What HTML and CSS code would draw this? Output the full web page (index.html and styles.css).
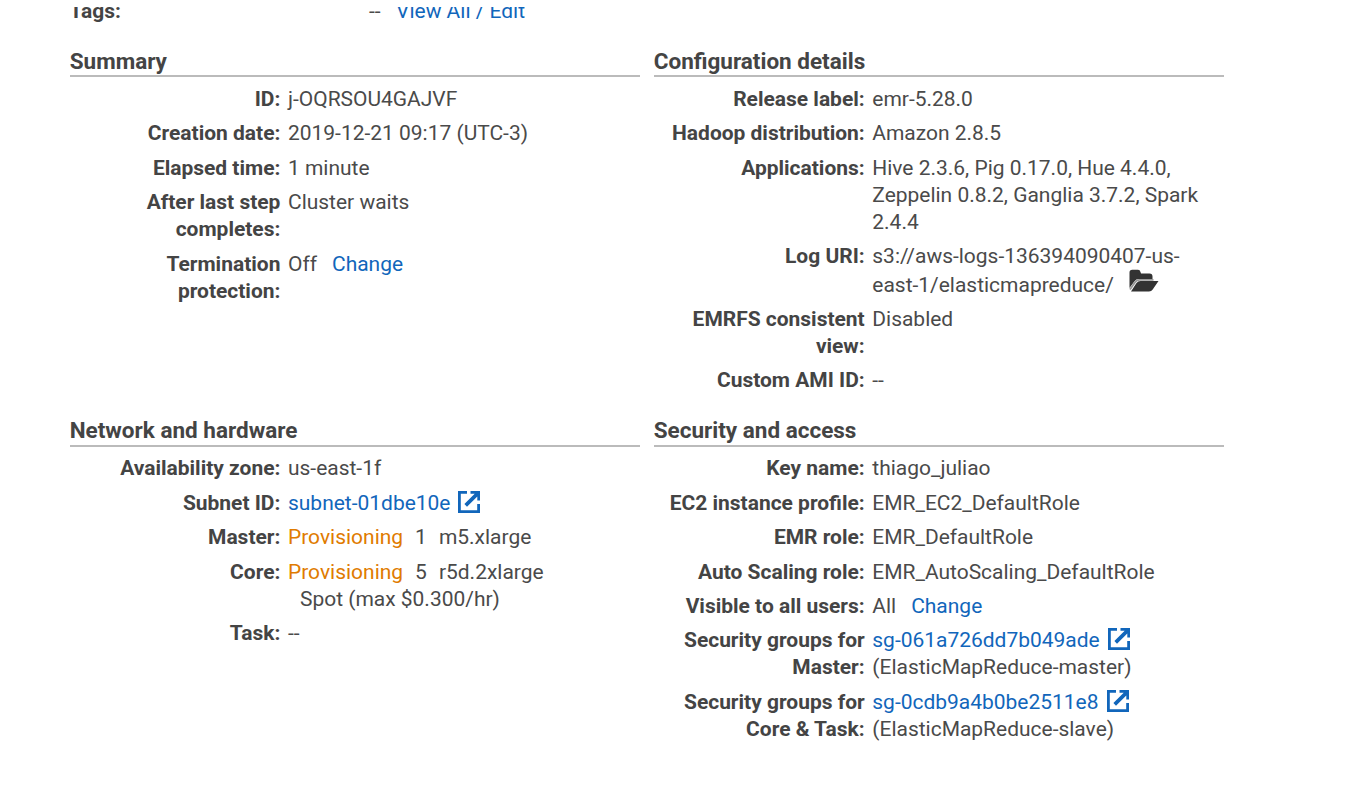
FILE: index.html
```html
<!DOCTYPE html>
<html lang="en">
<head>
<meta charset="utf-8">
<title>Cluster details</title>
<link rel="stylesheet" href="styles.css">
</head>
<body>
<svg class="defs" width="0" height="0"><symbol id="ext" viewBox="0 0 22 22"><path d="M9 1.400H1.400v19.200h19.200V13" fill="none" stroke="currentColor" stroke-width="2.800"/><path d="M12.500 0H22v9.500h-2.700V5.400L9 15.700 6.400 13.100 16.700 2.800H12.500Z" fill="currentColor"/></symbol></svg>
<main class="page">
<div class="tags"><b class="tags-label">Tags:</b><span>--</span><a class="tags-link">View All / Edit</a></div>
<div class="grid">
<section class="panel top left">
<h2>Summary</h2>
<dl>
<dt>ID:</dt><dd>j-OQRSOU4GAJVF</dd>
<dt>Creation date:</dt><dd>2019-12-21 09:17 (UTC-3)</dd>
<dt>Elapsed time:</dt><dd>1 minute</dd>
<dt>After last step<br>completes:</dt><dd>Cluster waits</dd>
<dt>Termination<br>protection:</dt><dd>Off<a class="change">Change</a></dd>
</dl>
</section>
<section class="panel top">
<h2>Configuration details</h2>
<dl>
<dt>Release label:</dt><dd>emr-5.28.0</dd>
<dt>Hadoop distribution:</dt><dd>Amazon 2.8.5</dd>
<dt>Applications:</dt><dd>Hive 2.3.6, Pig 0.17.0, Hue 4.4.0,<br>Zeppelin 0.8.2, Ganglia 3.7.2, Spark<br>2.4.4</dd>
<dt>Log URI:</dt><dd class="log">s3://aws-logs-136394090407-us-<br><span class="log-line">east-1/elasticmapreduce/<svg class="folder" viewBox="0 0 30 24"><path d="M.5 19V3.500Q.5.700 3.300.700H9Q11 .700 11.500 3l.5 1.500h8.500q3 0 3 3V10H10Q7 10 5.500 12.200Z" fill="#333"/><path d="M2 22.500l5.500-8.500Q9 12 11.500 12h18l-5.800 8.500q-1.300 2-3.700 2Z" fill="#333"/><path d="M1 20.500L6.300 12.900Q7.800 10.900 10.500 10.900H24.500" fill="none" stroke="#999" stroke-width="1.800"/></svg></span></dd>
<dt>EMRFS consistent<br>view:</dt><dd>Disabled</dd>
<dt>Custom AMI ID:</dt><dd>--</dd>
</dl>
</section>
<section class="panel left">
<h2>Network and hardware</h2>
<dl>
<dt>Availability zone:</dt><dd>us-east-1f</dd>
<dt>Subnet ID:</dt><dd><a>subnet-01dbe10e<svg class="ext"><use href="#ext"/></svg></a></dd>
<dt>Master:</dt><dd><span class="state">Provisioning</span><span class="count">1</span>m5.xlarge</dd>
<dt>Core:</dt><dd><span class="state">Provisioning</span><span class="count">5</span>r5d.2xlarge<br><span class="spot">Spot (max $0.300/hr)</span></dd>
<dt>Task:</dt><dd>--</dd>
</dl>
</section>
<section class="panel">
<h2>Security and access</h2>
<dl>
<dt>Key name:</dt><dd>thiago_juliao</dd>
<dt>EC2 instance profile:</dt><dd>EMR_EC2_DefaultRole</dd>
<dt>EMR role:</dt><dd>EMR_DefaultRole</dd>
<dt>Auto Scaling role:</dt><dd>EMR_AutoScaling_DefaultRole</dd>
<dt>Visible to all users:</dt><dd>All<a class="change">Change</a></dd>
<dt>Security groups for<br>Master:</dt><dd><a>sg-061a726dd7b049ade<svg class="ext"><use href="#ext"/></svg></a><br>(ElasticMapReduce-master)</dd>
<dt>Security groups for<br>Core &amp; Task:</dt><dd><a>sg-0cdb9a4b0be2511e8<svg class="ext"><use href="#ext"/></svg></a><br>(ElasticMapReduce-slave)</dd>
</dl>
</section>
</div>
</main>
</body>
</html>
```
FILE: styles.css
```css
body { margin: 0; background: #fff; color: #4a4a4a; font: 20.97px/27px Roboto, sans-serif; overflow: hidden; }
.defs { display: block; height: 0; }
.page { height: 786px; overflow: hidden; }
.tags { display: flex; height: 27px; margin: -2px 0 0 70px; clip-path: inset(9px 0 0 0); }
.tags-label { width: 299px; font-weight: 700; color: #444; text-indent: -0.5px; }
.tags-link { margin-left: 15.5px; }
a { color: #1166bb; }
.grid { display: grid; grid-template-columns: 570px 570px; column-gap: 14px; margin-left: 70px; padding-top: 22px; }
.top { height: 369px; }
h2 { margin: 0; height: 29px; line-height: 28px; font-size: 22.5px; font-weight: 700; color: #444; border-bottom: 2px solid #bbb; text-indent: -0.3px; }
.top h2 { height: 28px; }
dl { display: grid; grid-template-columns: 210.7px 1fr; column-gap: 7.6px; row-gap: 7.45px; margin: 8.3px 0 0; }
.top dl { margin-top: 9px; }
.left dl { grid-template-columns: 210.4px 1fr; }
dt { text-align: right; font-weight: 700; color: #444; }
dd { margin: 0; white-space: nowrap; }
.change { margin-left: 15px; }
.log-line { display: flex; height: 28.3px; line-height: 30px; }
.folder { width: 30px; height: 24px; margin: -1px 0 0 15.5px; }
.ext { width: 22px; height: 22px; margin: -6px 0 -3px 8px; vertical-align: baseline; }
.state { color: #e07b00; }
.count { margin: 0 12px; }
.spot { margin-left: 12px; }
```
